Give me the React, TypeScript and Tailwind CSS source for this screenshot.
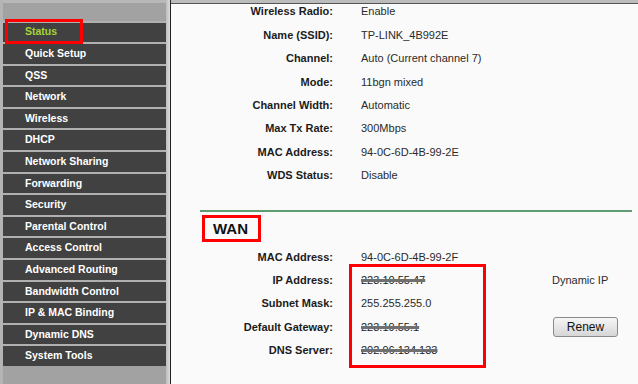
import React from 'react';

const menu = [
  'Status',
  'Quick Setup',
  'QSS',
  'Network',
  'Wireless',
  'DHCP',
  'Network Sharing',
  'Forwarding',
  'Security',
  'Parental Control',
  'Access Control',
  'Advanced Routing',
  'Bandwidth Control',
  'IP & MAC Binding',
  'Dynamic DNS',
  'System Tools',
];

const wireless: [string, string][] = [
  ['Wireless Radio:', 'Enable'],
  ['Name (SSID):', 'TP-LINK_4B992E'],
  ['Channel:', 'Auto (Current channel 7)'],
  ['Mode:', '11bgn mixed'],
  ['Channel Width:', 'Automatic'],
  ['Max Tx Rate:', '300Mbps'],
  ['MAC Address:', '94-0C-6D-4B-99-2E'],
  ['WDS Status:', 'Disable'],
];

function Row({ label, children, extra }: { label: string; children?: React.ReactNode; extra?: React.ReactNode }) {
  return (
    <div className="flex h-[23.4px] items-center">
      <div className="w-[162px] text-right text-[11px] font-bold text-[#1c1c1c]">{label}</div>
      <div className="ml-[28px] w-[191px] text-[11px] text-[#2a2a2a]">{children}</div>
      <div className="flex-1 text-[11px] text-[#2a2a2a]">{extra}</div>
    </div>
  );
}

function Crossed({ text }: { text: string }) {
  return (
    <span className="text-[#222] line-through decoration-[#707070] decoration-[3px]">{text}</span>
  );
}

export default function App() {
  return (
    <div className="relative flex h-[384px] w-[638px] overflow-hidden bg-[#fafafa] font-['Liberation_Sans',Arial,sans-serif]">
      {/* sidebar */}
      <div className="flex h-full w-[166px] flex-col border-l-[3px] border-[#b4b4b4] bg-[#a2a2a2]">
        <div className="h-[20.5px] border-t-[3px] border-[#b8b8b8]" />
        {menu.map((m, i) => (
          <div
            key={m}
            className="flex h-[21.6px] items-center border-t-2 border-[#b0b0b0] bg-[#414141] pl-[22px]"
          >
            <span className={`text-[10.5px] font-bold ${i === 0 ? 'text-[#a6d23a]' : 'text-white'}`}>{m}</span>
          </div>
        ))}
      </div>
      <div className="h-full w-[4px] bg-gradient-to-r from-[#bdbdbd] to-[#dcdcdc]" />
      <div className="h-full w-[1px] bg-[#222]" />

      {/* content */}
      <div className="flex flex-1 flex-col">
        <div className="relative z-10 h-[4px] border-b border-[#555] bg-[#bcbcbc]" />
        <div className="-mt-[4px]">
          {wireless.map(([l, v]) => (
            <Row key={l} label={l}>
              {v}
            </Row>
          ))}
        </div>

        <div className="ml-[29px] mr-[6px] mt-[23.3px] h-[2px] bg-[#5f9c74]" />
        <div className="ml-[31px] mt-[3px] flex h-[27px] w-[59px] items-center border-[3px] border-[#f00] pl-[8px]">
          <span className="text-[15px] font-bold text-[#111]">WAN</span>
        </div>

        <div className="mt-[2.8px]">
          <Row label="MAC Address:">94-0C-6D-4B-99-2F</Row>
          <Row label="IP Address:" extra="Dynamic IP">
            <Crossed text="223.10.55.47" />
          </Row>
          <Row label="Subnet Mask:">255.255.255.0</Row>
          <Row
            label="Default Gateway:"
            extra={
              <button className="ml-[1px] h-[20px] w-[65px] rounded-[3px] border border-[#8a8a8a] bg-gradient-to-b from-[#f6f6f6] to-[#d6d6d6] text-[12px] text-[#111]">
                Renew
              </button>
            }
          >
            <Crossed text="223.19.55.1" />
          </Row>
          <Row label="DNS Server:">
            <Crossed text="202.96.134.133" />
          </Row>
        </div>
      </div>

      {/* annotations */}
      <div className="absolute left-[5px] top-[19px] h-[25px] w-[78px] border-[3px] border-[#f00]" />
      <div className="absolute left-[349px] top-[264px] h-[104px] w-[137px] border-[3px] border-[#f00]" />
    </div>
  );
}
